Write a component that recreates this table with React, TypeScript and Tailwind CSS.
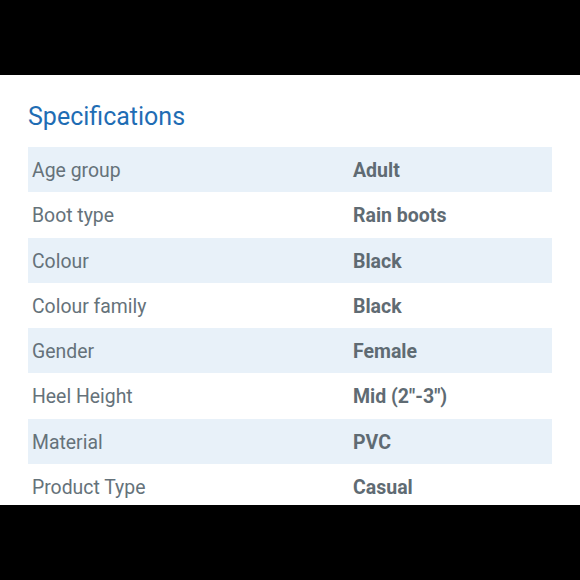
import React from 'react';

const specs = [
  { label: 'Age group', value: 'Adult' },
  { label: 'Boot type', value: 'Rain boots' },
  { label: 'Colour', value: 'Black' },
  { label: 'Colour family', value: 'Black' },
  { label: 'Gender', value: 'Female' },
  { label: 'Heel Height', value: 'Mid (2"-3")' },
  { label: 'Material', value: 'PVC' },
  { label: 'Product Type', value: 'Casual' },
];

export default function App() {
  return (
    <div className="w-[580px] h-[580px] bg-black flex flex-col overflow-hidden font-['Roboto',sans-serif]">
      <div className="h-[75px] shrink-0" />
      {/* Specifications panel */}
      <div className="h-[430px] shrink-0 bg-white overflow-hidden pl-[28px] pr-[28px] pt-[27px]">
        <h2 className="text-[25px] leading-[30px] text-[#1f6db4] mb-[15px]">Specifications</h2>
        <div>
          {specs.map((row, i) => (
            <div
              key={row.label}
              className={`flex items-center h-[45.25px] pt-[2px] ${i % 2 === 0 ? 'bg-[#e8f1f9]' : 'bg-white'}`}
            >
              <div className="w-[325px] pl-[4px] text-[19.4px] text-[#65727a]">{row.label}</div>
              <div className="flex-1 text-[19.5px] font-bold text-[#5f6b73]">{row.value}</div>
            </div>
          ))}
        </div>
      </div>
    </div>
  );
}
